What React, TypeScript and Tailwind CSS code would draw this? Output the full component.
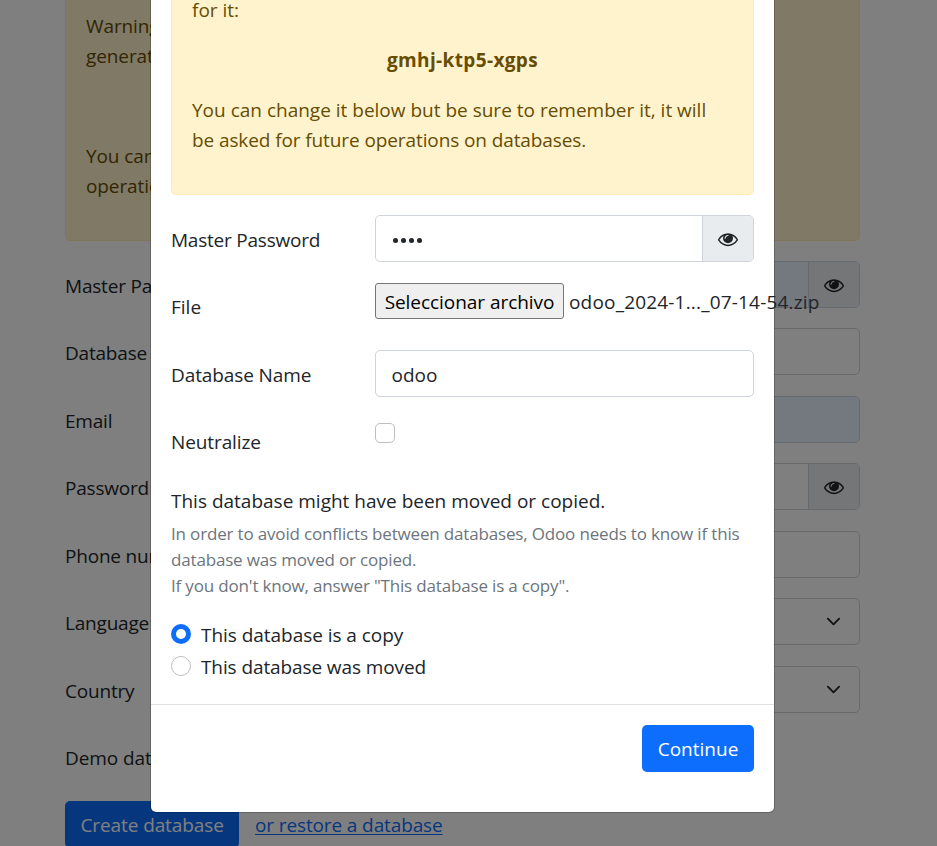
import type { ReactNode } from "react";

function Eye() {
  return (
    <svg viewBox="0 0 1792 1792" className="size-5 fill-[#212529]">
      <path d="M1664 960q-152-236-381-353 61 104 61 225 0 185-131.5 316.5t-316.5 131.5-316.5-131.5-131.5-316.5q0-121 61-225-229 117-381 353 133 205 333.5 326.5t434.5 121.5 434.5-121.5 333.5-326.5zm-720-384q0-20-14-34t-34-14q-125 0-214.5 89.5t-89.5 214.5q0 20 14 34t34 14 34-14 14-34q0-86 61-147t147-61q20 0 34-14t14-34zm848 384q0 34-20 69-140 230-376.5 368.5t-499.5 138.5-499.5-139-376.5-368q-20-35-20-69t20-69q140-229 376.5-368t499.5-139 499.5 139 376.5 368q20 35 20 69z" />
    </svg>
  );
}

function Chevron() {
  return (
    <svg viewBox="0 0 16 16" className="mr-[18px] h-[15px] w-[15px]" fill="none" stroke="#212529" strokeWidth="2" strokeLinecap="round" strokeLinejoin="round">
      <path d="m2 5 6 6 6-6" />
    </svg>
  );
}

type FieldProps = { filled?: boolean; eye?: boolean; select?: boolean; children?: ReactNode };

function Field({ filled, eye, select, children }: FieldProps) {
  return (
    <div className={`flex h-[47px] flex-1 overflow-hidden rounded-[5px] border border-[#ced4da] ${filled ? "bg-[#e8f0fe]" : "bg-white"}`}>
      <div className="flex flex-1 items-center pt-[3px] pl-[15.5px]">{children}</div>
      {select && (
        <div className="flex items-center">
          <Chevron />
        </div>
      )}
      {eye && (
        <div className="flex w-[51.5px] items-center justify-center border-l border-[#ced4da] bg-[#e9ecef] pt-px">
          <Eye />
        </div>
      )}
    </div>
  );
}

const pageRows: ({ label: string } & FieldProps)[] = [
  { label: "Master Password", filled: true, eye: true },
  { label: "Database Name" },
  { label: "Email", filled: true },
  { label: "Password", eye: true },
  { label: "Phone number" },
  { label: "Language", select: true },
  { label: "Country", select: true },
];

function Page() {
  return (
    <div className="flex h-[846px] w-[795px] flex-col overflow-hidden">
      <div className="h-[240.9px] shrink-0 rounded-b-[5px] border border-t-0 border-[#ffecb5] bg-[#fff3cd] px-5 pt-[11px] tracking-[-0.1px] text-[#664d03]">
        <p>
          Warning,
          <br />
          generated
        </p>
        <p className="mt-[70px]">
          You can
          <br />
          operations
        </p>
      </div>
      {pageRows.map(({ label, ...field }) => (
        <div key={label} className="mt-5 flex h-[47.5px] shrink-0 items-start">
          <div className="w-[270px] pt-2.5 tracking-[-0.2px]">{label}</div>
          <Field {...field} />
        </div>
      ))}
      <div className="mt-5 h-[47.5px] shrink-0 pt-2.5 tracking-[-0.1px]">Demo data</div>
      <div className="mt-5 flex h-[47.5px] shrink-0 items-start">
        <div className="h-[47px] w-[174px] rounded-[5px] bg-[#0d6efd] pt-[9px] pl-[15.5px] tracking-[-0.1px] text-white">Create database</div>
        <a className="ml-4 pt-[9px] tracking-[-0.12px] text-[#0d6efd] underline underline-offset-2">or restore a database</a>
      </div>
    </div>
  );
}

function ModalRow({ label, tracking, children }: { label: string; tracking: string; children: ReactNode }) {
  return (
    <div className="mt-5 flex h-[47.5px] items-start">
      <div className={`w-[204px] shrink-0 pt-2.5 ${tracking}`}>{label}</div>
      {children}
    </div>
  );
}

function Modal() {
  return (
    <div className="flex h-[813px] w-[625px] flex-col rounded-b-md border border-t-0 border-black/20 bg-white bg-clip-padding">
      <div className="px-5">
        <div className="flex h-[194.9px] flex-col rounded-b-[5px] border border-t-0 border-[#ffecb5] bg-[#fff3cd] px-5 text-[#664d03]">
          <p className="-mt-[5px]">for it:</p>
          <p className="mt-5 text-center font-bold tracking-[0.36px]">gmhj-ktp5-xgps</p>
          <p className="mt-5 whitespace-nowrap">
            You can change it below but be sure to remember it, it will
            <br />
            <span className="tracking-[-0.1px]">be asked for future operations on databases.</span>
          </p>
        </div>
        <ModalRow label="Master Password" tracking="tracking-[-0.22px]">
          <Field eye>
            <span className="ml-px flex gap-[3.1px] pt-px">
              {[0, 1, 2, 3].map((i) => (
                <i key={i} className="size-[5px] rounded-full bg-[#212529]" />
              ))}
            </span>
          </Field>
        </ModalRow>
        <ModalRow label="File" tracking="tracking-normal">
          <div className="flex shrink-0 items-start whitespace-nowrap pt-px">
            <div className="h-9 w-[189px] rounded-[3px] border border-[#767676] bg-[#efefef] pt-[3px] text-center tracking-[-0.05px] text-black">Seleccionar archivo</div>
            <span className="ml-[5px] pt-1 tracking-[0.18px]">odoo_2024-1..._07-14-54.zip</span>
          </div>
        </ModalRow>
        <ModalRow label="Database Name" tracking="tracking-[-0.1px]">
          <Field>odoo</Field>
        </ModalRow>
        <ModalRow label="Neutralize" tracking="tracking-[-0.1px]">
          <div className="mt-[5.5px] size-5 rounded-[5px] border border-[#bfbfbf]" />
        </ModalRow>
        <p className="mt-5 pt-px whitespace-nowrap">This database might have been moved or copied.</p>
        <p className="mt-[5px] text-[17px] leading-[26.25px] tracking-[-0.17px] whitespace-nowrap text-[#6c757d]">
          In order to avoid conflicts between databases, Odoo needs to know if this
          <br />
          database was moved or copied.
          <br />
          If you don't know, answer "This database is a copy".
        </p>
        <div className="mt-5 flex h-8 items-start">
          <div className="mt-[4.2px] flex size-5 items-center justify-center rounded-full bg-[#0d6efd]">
            <div className="size-2.5 rounded-full bg-white" />
          </div>
          <span className="ml-2.5 tracking-[-0.04px]">This database is a copy</span>
        </div>
        <div className="flex h-8 items-start">
          <div className="mt-[4.2px] size-5 rounded-full border border-[#bfbfbf]" />
          <span className="ml-2.5 tracking-[-0.1px]">This database was moved</span>
        </div>
      </div>
      <div className="mt-auto flex h-[108px] shrink-0 justify-end border-t border-[#dee2e6] pt-5 pr-5">
        <button className="h-[47px] w-28 rounded-[5px] bg-[#0d6efd] pt-px text-white">Continue</button>
      </div>
    </div>
  );
}

export default function App() {
  return (
    <div className="relative h-[846px] w-[937px] overflow-hidden bg-white pl-[65px] font-['Open_Sans',sans-serif] text-[19px] leading-[30px] text-[#212529]">
      <Page />
      <div className="absolute inset-0 bg-black/50 pl-[150px]">
        <Modal />
      </div>
    </div>
  );
}
